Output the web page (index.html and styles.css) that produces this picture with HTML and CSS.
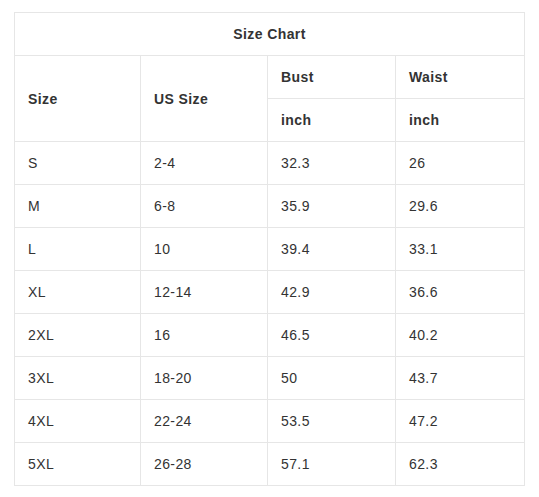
FILE: index.html
```html
<!DOCTYPE html>
<html>
<head>
<meta charset="utf-8">
<link rel="stylesheet" href="styles.css">
</head>
<body>
<table class="chart">
  <colgroup>
    <col class="c1"><col class="c2"><col class="c3"><col class="c4">
  </colgroup>
  <thead>
    <tr><th colspan="4" class="title">Size Chart</th></tr>
    <tr><th rowspan="2">Size</th><th rowspan="2">US Size</th><th>Bust</th><th>Waist</th></tr>
    <tr><th>inch</th><th>inch</th></tr>
  </thead>
  <tbody>
    <tr><td>S</td><td>2-4</td><td>32.3</td><td>26</td></tr>
    <tr><td>M</td><td>6-8</td><td>35.9</td><td>29.6</td></tr>
    <tr><td>L</td><td>10</td><td>39.4</td><td>33.1</td></tr>
    <tr><td>XL</td><td>12-14</td><td>42.9</td><td>36.6</td></tr>
    <tr><td>2XL</td><td>16</td><td>46.5</td><td>40.2</td></tr>
    <tr><td>3XL</td><td>18-20</td><td>50</td><td>43.7</td></tr>
    <tr><td>4XL</td><td>22-24</td><td>53.5</td><td>47.2</td></tr>
    <tr><td>5XL</td><td>26-28</td><td>57.1</td><td>62.3</td></tr>
  </tbody>
</table>
</body>
</html>
```
FILE: styles.css
```css
html, body {
  margin: 0;
  padding: 0;
  background: #fff;
}
body {
  padding: 12px 0 0 14px;
  font-family: "Liberation Sans", Arial, sans-serif;
  font-size: 14px;
  letter-spacing: 0.4px;
  color: #333;
}
.chart {
  border-collapse: collapse;
  table-layout: fixed;
  width: 510px;
}
.c1 { width: 126px; }
.c2 { width: 127px; }
.c3 { width: 128px; }
.c4 { width: 129px; }
.chart th, .chart td {
  border: 1px solid #e6e6e6;
  height: 43px;
  padding: 0 0 0 13px;
  text-align: left;
  vertical-align: middle;
  font-weight: normal;
  box-sizing: border-box;
}
.chart th {
  font-weight: bold;
}
.chart th.title {
  text-align: center;
  padding: 0;
}
```
